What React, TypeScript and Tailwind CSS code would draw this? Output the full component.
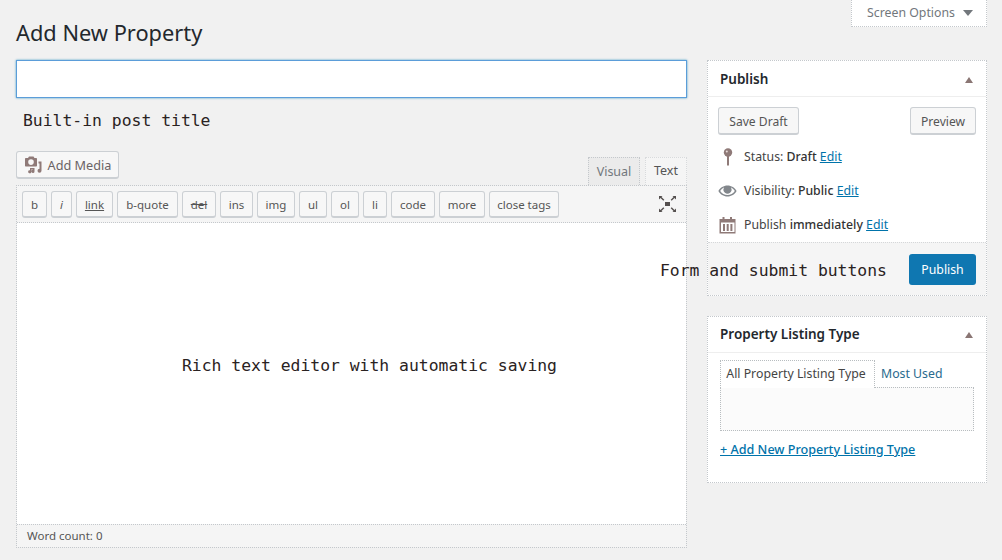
const btn = "flex items-center justify-center pt-[2px] bg-[#f7f7f7] border border-[#ccd0d4] border-b-2 rounded-[3px] text-[#555] leading-none";
const qt = btn + " h-[27px] text-[11.500px]";

function Q({ w, children, cls = "" }: { w: number; children: React.ReactNode; cls?: string }) {
  return <div className={qt + " " + cls} style={{ width: w }}>{children}</div>;
}

function MediaIcon() {
  return (
    <svg width="18" height="18" viewBox="0 0 18 18" fill="#8f7a78">
      <path fillRule="evenodd" d="M2 2h2l1-1.500h4.500l1 1.500h1.500c.6 0 1 .4 1 1v6.500c0 .6-.4 1-1 1H2c-.6 0-1-.4-1-1V3c0-.6.4-1 1-1zM7 3.300a2.800 2.800 0 1 0 0 5.600 2.800 2.800 0 0 0 0-5.600z" />
      <path d="M15 5.500h2.500v9.300a2 2 0 1 1-2-2V7.500H14.500V5.500zM6 12h4.500v3.400a1.600 1.600 0 1 1-1.400-1.600V13.500H7.300v2.300a1.600 1.600 0 1 1-1.300-1.600z" />
    </svg>
  );
}
function PinIcon() {
  return (
    <svg width="12" height="18" viewBox="0 0 12 18" fill="#8f7a78">
      <circle cx="6" cy="4.500" r="4.200" />
      <rect x="5" y="7" width="2" height="10.500" />
      <circle cx="4.800" cy="3.400" r="1" fill="#e9dcda" />
    </svg>
  );
}
function EyeIcon() {
  return (
    <svg width="19" height="14" viewBox="0 0 19 14" fill="#82878c">
      <path fillRule="evenodd" d="M9.500 1.500C5.500 1.500 2.200 3.800.4 7c1.800 3.200 5.100 5.500 9.100 5.500s7.300-2.300 9.100-5.500c-1.800-3.200-5.100-5.500-9.100-5.500zM9.500 11.100C6.500 11.100 3.800 9.500 2.200 7 3.200 5.500 4.500 4.300 6.100 3.600a4 4 0 1 0 6.800 0c1.600.7 2.900 1.900 3.900 3.400-1.600 2.500-4.300 4.100-7.300 4.100z" />
    </svg>
  );
}
function CalIcon() {
  return (
    <svg width="17" height="18" viewBox="0 0 17 18" fill="#8f7a78">
      <path fillRule="evenodd" d="M.5 3h3V1h2v2h5.500V1h2v2h3.500v14.500H.5V3zM2 6.500v9.500h13.500V6.500z" />
      <rect x="4" y="8" width="2" height="7" />
      <rect x="7.700" y="8" width="2" height="7" />
      <rect x="11.400" y="8" width="2" height="7" />
    </svg>
  );
}
function ExpandIcon() {
  return (
    <svg width="17" height="16" viewBox="0 0 17 16" fill="#55504f">
      <rect x="6" y="6" width="5" height="4" />
      <path d="M0 0h3.500L2.500 1l2.800 2.800-1 1L1.500 2 0 3.500zM17 0h-3.500l1 1-2.800 2.800 1 1L15.500 2 17 3.500zM0 16h3.500l-1-1 2.800-2.800-1-1L1.500 14 0 12.500zM17 16h-3.500l1-1-2.800-2.800 1-1 2.800 2.800 1.500-1.500z" />
    </svg>
  );
}
function Up() {
  return <div className="w-0 h-0 border-x-[4.500px] border-x-transparent border-b-[6px] border-b-[#8a7674]" />;
}

export default function App() {
  const sans = "font-['Noto_Sans','Open_Sans',sans-serif]";
  const mono = "font-['DejaVu_Sans_Mono',monospace] text-[16.400px] leading-none text-[#2a2222]";
  const link = "text-[#0073aa] underline";
  const box = "bg-white border border-dotted border-[#c4c8cc]";
  return (
    <div className={`relative w-[1002px] h-[560px] overflow-hidden bg-[#f1f1f1] ${sans} text-[12.300px] text-[#444]`}>
      <div className="flex justify-end pr-[15px]">
        <div className="flex items-center justify-center gap-[8px] pl-[2px] w-[136px] h-[27px] bg-white border border-t-0 border-dotted border-[#c4c8cc] text-[#72777c]">
          <span>Screen Options</span>
          <div className="w-0 h-0 mt-[-1px] border-x-[5px] border-x-transparent border-t-[6px] border-t-[#72777c]" />
        </div>
      </div>

      <div className="flex gap-[20px] pl-[16px] pr-[15px]">
        <div className="w-[671px] shrink-0">
          <h1 className="mt-[-8px] h-[41px] pb-[12px] flex items-center text-[21.800px] font-normal text-[#23282d]">Add New Property</h1>
          <div className="h-[38px] bg-white border border-[#5b9dd9] shadow-[0_0_2px_rgba(30,140,190,.8)]" />
          <div className={`${mono} pl-[7px] mt-[15px] h-[38px]`}>Built-in post title</div>

          <div className="flex items-end justify-between h-[34px]">
            <div className={`${btn} w-[103px] h-[28px] gap-[6px] self-start`}>
              <span className="mt-[-2px]"><MediaIcon /></span>
              <span className="text-[#6b6365] text-[12.700px]">Add Media</span>
            </div>
            <div className="flex gap-[5px] text-[12.500px]">
              <div className="w-[52px] h-[28px] pt-[1px] flex items-center justify-center bg-[#ebebeb] border border-b-0 border-dotted border-[#c4c8cc] text-[#72777c]">Visual</div>
              <div className="w-[42px] h-[28px] flex items-center justify-center bg-[#f5f5f5] border border-b-0 border-dotted border-[#d8dadc] text-[#555]">Text</div>
            </div>
          </div>

          <div className="border border-dotted border-[#c4c8cc]">
            <div className="flex items-center h-[37px] pl-[5px] pr-[9px] gap-[4px] bg-[#f5f5f5] border-b border-dotted border-[#c4c8cc]">
              <Q w={25}>b</Q>
              <Q w={21} cls="italic">i</Q>
              <Q w={37} cls="underline">link</Q>
              <Q w={61}>b-quote</Q>
              <Q w={34} cls="line-through">del</Q>
              <Q w={33}>ins</Q>
              <Q w={38}>img</Q>
              <Q w={28}>ul</Q>
              <Q w={28}>ol</Q>
              <Q w={24}>li</Q>
              <Q w={44}>code</Q>
              <Q w={46}>more</Q>
              <Q w={70}>close tags</Q>
              <div className="ml-auto mr-[1px] mt-[-1px]"><ExpandIcon /></div>
            </div>
            <div className="h-[301px] bg-white flex items-center justify-center pl-[36px] pb-[14px]">
              <span className={mono}>Rich text editor with automatic saving</span>
            </div>
            <div className="h-[23px] flex items-center pl-[10px] bg-[#f5f5f5] border-t border-dotted border-[#c4c8cc] text-[11.500px] text-[#555]">Word count: 0</div>
          </div>
        </div>

        <div className="w-[280px] shrink-0 pt-[33px]">
          <div className={box}>
            <div className="h-[36px] pt-[2px] flex items-center justify-between pl-[12px] pr-[13px] border-b border-[#eeeeee]">
              <span className="text-[13.500px] font-semibold text-[#23282d]">Publish</span>
              <Up />
            </div>
            <div className="flex justify-between px-[10px] pt-[10px] text-[12.100px]">
              <div className={`${btn} w-[81px] h-[28px] pt-[4px]`}>Save Draft</div>
              <div className={`${btn} w-[66px] h-[28px] pt-[4px]`}>Preview</div>
            </div>
            <div className="pl-[12px] pt-[5px] h-[107px] flex flex-col">
              <div className="h-[34px] shrink-0 flex items-center">
                <div className="w-[24px] pl-[2px]"><PinIcon /></div>
                <span>Status: <span className="font-medium text-[#333]">Draft</span> <span className={link}>Edit</span></span>
              </div>
              <div className="h-[34px] shrink-0 flex items-center">
                <div className="w-[24px] ml-[-2px] mr-[2px]"><EyeIcon /></div>
                <span>Visibility: <span className="font-medium text-[#333]">Public</span> <span className={link}>Edit</span></span>
              </div>
              <div className="h-[34px] shrink-0 flex items-center">
                <div className="w-[24px] ml-[-1px] mr-[1px]"><CalIcon /></div>
                <span>Publish <span className="font-medium text-[#333]">immediately</span> <span className={link}>Edit</span></span>
              </div>
            </div>
            <div className="relative h-[53px] flex items-center justify-end pr-[10px] bg-[#f5f5f5] border-t border-dotted border-[#d5d7d9]">
              <span className={`${mono} absolute left-[-48px] top-[20px]`}>Form and submit buttons</span>
              <div className="w-[67px] h-[31px] pt-[3px] flex items-center justify-center bg-[#0f77b1] rounded-[3px] text-white">Publish</div>
            </div>
          </div>

          <div className={`${box} mt-[20px] h-[167px]`}>
            <div className="h-[36px] flex items-center justify-between pl-[12px] pr-[13px] border-b border-[#eeeeee]">
              <span className="text-[13.500px] font-semibold text-[#23282d]">Property Listing Type</span>
              <Up />
            </div>
            <div className="px-[12px] pt-[7px]">
              <div className="flex h-[28px] relative z-10">
                <div className="w-[155px] h-[28px] flex items-center justify-center pr-[3px] bg-white border border-b-0 border-dotted border-[#b8bdc0] text-[#444] whitespace-nowrap">All Property Listing Type</div>
                <div className="pl-[6px] flex items-center text-[#2a6a8e]">Most Used</div>
              </div>
              <div className="h-[44px] mt-[-1px] bg-[#fbfbfb] border border-dotted border-[#b8bdc0]" />
              <div className={`${link} mt-[10px] text-[12.600px] font-medium whitespace-nowrap`}>+ Add New Property Listing Type</div>
            </div>
          </div>
        </div>
      </div>
    </div>
  );
}
